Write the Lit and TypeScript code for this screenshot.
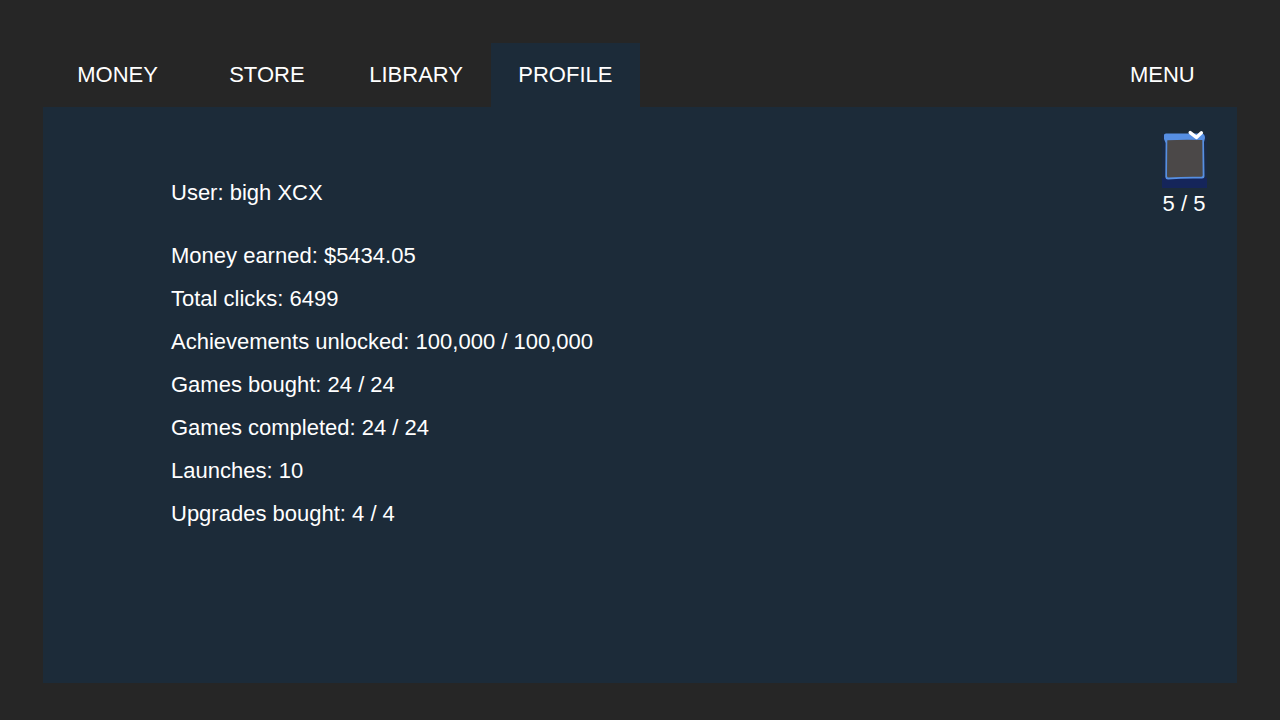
import { LitElement, html, css } from "lit";
import { customElement, state } from "lit/decorators.js";

const TABS = ["MONEY", "STORE", "LIBRARY", "PROFILE"];

const STATS: [string, string][] = [
  ["Money earned", "$5434.05"],
  ["Total clicks", "6499"],
  ["Achievements unlocked", "100,000 / 100,000"],
  ["Games bought", "24 / 24"],
  ["Games completed", "24 / 24"],
  ["Launches", "10"],
  ["Upgrades bought", "4 / 4"],
];

@customElement("app-root")
export class AppRoot extends LitElement {
  @state() private active = "PROFILE";

  static styles = css`
    :host {
      display: flex;
      flex-direction: column;
      box-sizing: border-box;
      min-height: 100vh;
      padding: 43px 43px 37px;
      background: #262626;
      color: #fff;
      font-family: "Liberation Sans", Arial, sans-serif;
      font-size: 22px;
      line-height: 43px;
    }
    .bar {
      display: flex;
    }
    .tab {
      flex: 0 0 12.5%;
      height: 64px;
      padding: 0 0 2px;
      border: 0;
      background: none;
      color: inherit;
      font: inherit;
      cursor: pointer;
    }
    .tab.active {
      background: #1c2b39;
    }
    .menu {
      margin-left: auto;
    }
    .panel {
      flex: 1;
      display: flex;
      justify-content: space-between;
      align-items: flex-start;
      padding: 24px 25px 24px 128px;
      background: #1c2b39;
    }
    .profile {
      padding-top: 40px;
    }
    .user {
      margin: 0 0 20px;
    }
    .stats {
      margin: 0;
      padding: 0;
      list-style: none;
    }
    .badge {
      display: flex;
      flex-direction: column;
      align-items: center;
      width: 56px;
      line-height: 26px;
    }
    .icon {
      display: block;
      width: 52px;
      height: 60px;
      overflow: visible;
    }
  `;

  render() {
    return html`
      <nav class="bar">
        ${TABS.map(
          (t) => html`<button
            class="tab ${t === this.active ? "active" : ""}"
            @click=${() => (this.active = t)}
          >${t}</button>`
        )}
        <button class="tab menu">MENU</button>
      </nav>
      <main class="panel">
        <section class="profile">
          <p class="user">User: bigh XCX</p>
          <ul class="stats">
            ${STATS.map(([label, value]) => html`<li>${label}: ${value}</li>`)}
          </ul>
        </section>
        <aside class="badge">
          <svg class="icon" viewBox="0 0 52 60" aria-hidden="true">
            <rect x="4" y="3" width="45" height="54" rx="1" fill="#17295a" opacity="0.35" />
            <rect x="4" y="47" width="45" height="10" fill="#15255a" />
            <path d="M8 2.5 L44 2.5 Q47 3 47 7 L46 11 L46.5 45 Q46.5 47.5 44 47.5 Q26 47 10 48.5 Q7.5 48.5 7.3 46 L7.6 12 L6 8 L6 4 Q6 2.5 8 2.5 Z" fill="#568fe3" />
            <path d="M9.3 9.2 Q26 8.4 44.3 9 L44.7 44.5 Q44.5 45.8 43 45.8 Q26 45.4 10.5 46.6 Q9 46.6 9 45 Z" fill="#4b4848" />
            <path d="M32.2 1.6 L38.4 6.4 L43.4 1.8" fill="none" stroke="#fff" stroke-width="3.4" stroke-linejoin="round" stroke-linecap="round" />
          </svg>
          <span>5 / 5</span>
        </aside>
      </main>
    `;
  }
}
